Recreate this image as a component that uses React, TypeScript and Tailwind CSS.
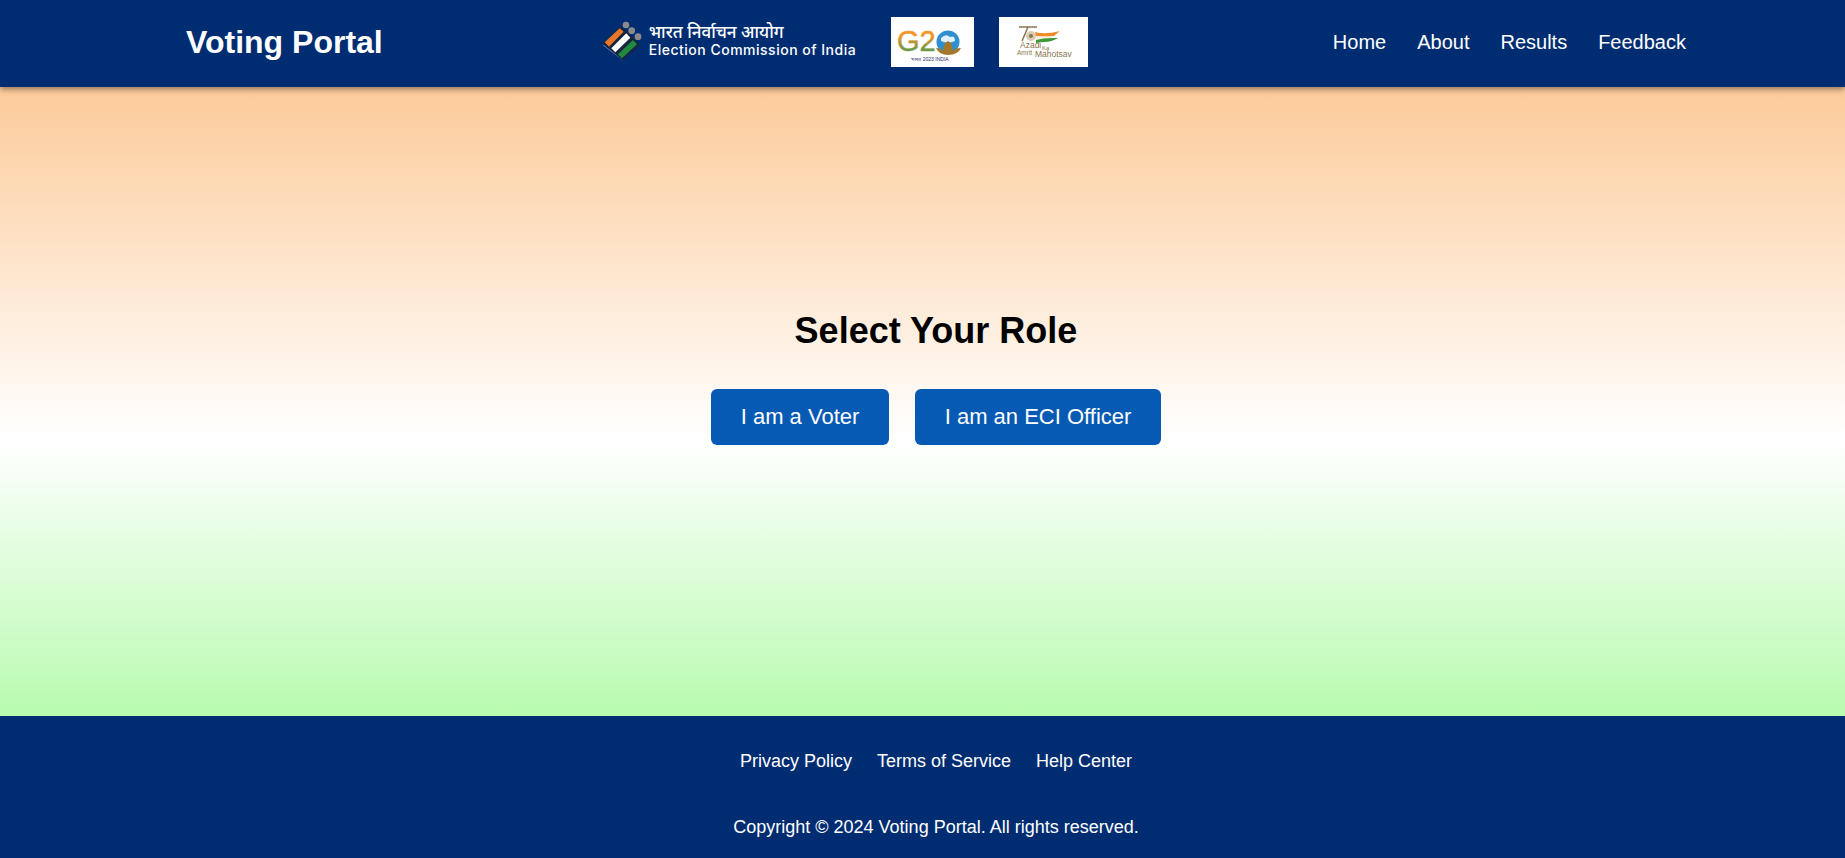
export default function App() {
  return (
    <div className="flex h-[858px] flex-col font-['Liberation_Sans',Arial,sans-serif] text-white">
      <header className="relative z-10 flex h-[87px] shrink-0 items-center justify-between bg-[#002d72] pb-[4px] pl-[186px] pr-[159px] shadow-[0_2px_6px_rgba(0,0,0,0.45)]">
        <h1 className="text-[32px] font-bold">Voting Portal</h1>
        <div className="ml-[-25px] mt-[1px] flex items-center">
          <div className="flex w-[255px] items-center gap-[6px]">
            <svg width="40" height="42" viewBox="15 18 120 126" className="shrink-0">
              <path d="M15 90 L75 135" stroke="#8fa9cf" strokeWidth="2" fill="none" />
              <path d="M14 84 L68 34 L126 88 L74 136 Z" fill="#16243c" />
              <path d="M20 82 L65 40 L77 50 L33 95 Z" fill="#e9772b" />
              <path d="M40 100 L85 55 L97 68 L52 112 Z" fill="#ffffff" />
              <path d="M60 118 L105 75 L117 88 L72 130 Z" fill="#1f8a3f" />
              <circle cx="84" cy="30" r="10" fill="#8a8a8a" />
              <circle cx="101" cy="47" r="10" fill="#8a8a8a" />
              <circle cx="120" cy="65" r="10" fill="#8a8a8a" />
            </svg>
            <div className="mb-[4px] font-['Inter',sans-serif]">
              <div className="whitespace-nowrap font-['Noto_Sans',sans-serif] text-[17px] font-medium leading-[19px]">भारत निर्वाचन आयोग</div>
              <div className="whitespace-nowrap text-[14px] font-medium leading-[17px] tracking-[0.5px]">Election Commission of India</div>
            </div>
          </div>
          <div className="ml-[33px] flex h-[50px] w-[83px] items-center justify-center bg-white">
            <svg width="83" height="50" viewBox="0 0 83 50">
              <defs>
                <linearGradient id="g2" x1="0" y1="0" x2="0" y2="1">
                  <stop offset="0.35" stopColor="#f0962a" />
                  <stop offset="0.75" stopColor="#6f9a45" />
                </linearGradient>
              </defs>
              <text x="6" y="34" fontFamily="Liberation Sans" fontSize="29" fill="url(#g2)" stroke="url(#g2)" strokeWidth="0.5">G2</text>
              <circle cx="57" cy="25" r="11.5" fill="#2f8fd0" />
              <path d="M50 21 Q55 16 59 20 Q64 18 64 24 Q57 27 50 24Z" fill="#dff0f9" />
              <path d="M45 31 Q50 31 53 34 Q51 27 57 24 Q63 27 61 34 Q64 31 70 31 Q67 38 57 38 Q48 38 45 31Z" fill="#a5772b" />
              <text x="39" y="44" textAnchor="middle" fontFamily="Liberation Sans" fontSize="5" fill="#26276e">भारत 2023 INDIA</text>
            </svg>
          </div>
          <div className="ml-[25px] flex h-[50px] w-[89px] items-center justify-center bg-white">
            <svg width="89" height="50" viewBox="0 0 89 50">
              <path d="M20 10 H29 L23 24 M29 10 H38" stroke="#8a7550" strokeWidth="1.5" fill="none" />
              <circle cx="32" cy="19" r="5" fill="#d8ccb4" />
              <circle cx="32" cy="19" r="2" fill="#8a7550" />
              <path d="M36 15 Q46 18 61 14 Q57 17 55 19 Q46 20 37 19Z" fill="#ee8a2a" />
              <path d="M37 19 Q46 20 55 19 L52 21 Q44 21 37 23Z" fill="#f7eedd" />
              <path d="M37 23 Q44 21 53 21 Q56 21 59 21 Q52 25 46 25 Q41 25 37 26Z" fill="#3a9a3a" />
              <text x="21" y="31" fontFamily="Liberation Sans" fontSize="8.5" fill="#8a7550">Azadi</text>
              <text x="43" y="33" fontFamily="Liberation Sans" fontSize="6" fill="#8a7550">Ka</text>
              <text x="18" y="38" fontFamily="Liberation Sans" fontSize="6.5" fill="#8a7550">Amrit</text>
              <text x="36" y="39.5" fontFamily="Liberation Sans" fontSize="8.5" fill="#8a7550">Mahotsav</text>
            </svg>
          </div>
        </div>
        <nav className="flex gap-[31px] text-[20px]">
          <a>Home</a>
          <a>About</a>
          <a>Results</a>
          <a>Feedback</a>
        </nav>
      </header>
      <main className="flex flex-1 flex-col items-center justify-center bg-[linear-gradient(to_bottom,#fccb99,#ffffff_56%,#b8fbaf)] pb-[54px] pl-[27px]">
        <h2 className="text-[36px] font-bold text-black">Select Your Role</h2>
        <div className="mt-[31px] flex gap-[26px]">
          <button className="h-[56px] w-[178px] rounded-[6px] bg-[#075ab4] pb-[1px] text-[22px]">I am a Voter</button>
          <button className="h-[56px] w-[246px] rounded-[6px] bg-[#075ab4] pb-[1px] text-[22px]">I am an ECI Officer</button>
        </div>
      </main>
      <footer className="flex h-[142px] shrink-0 flex-col items-center bg-[#002d72] pl-[27px] pt-[32px] text-[18px]">
        <div className="flex gap-[25px]">
          <a>Privacy Policy</a>
          <a>Terms of Service</a>
          <a>Help Center</a>
        </div>
        <p className="mt-[39px]">Copyright © 2024 Voting Portal. All rights reserved.</p>
      </footer>
    </div>
  );
}
